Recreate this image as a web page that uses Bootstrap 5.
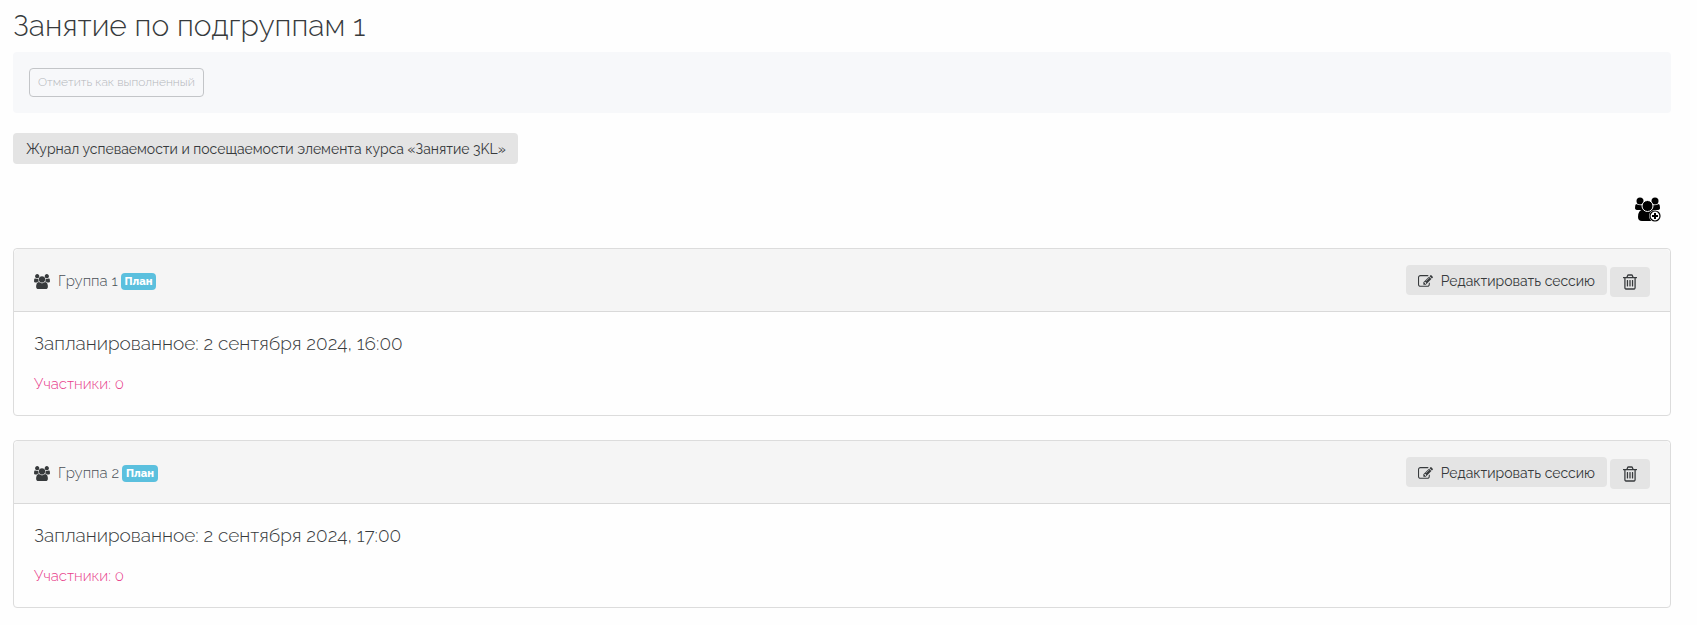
<!DOCTYPE html>
<html lang="ru">
<head>
<meta charset="utf-8">
<meta name="viewport" content="width=device-width, initial-scale=1">
<title>Занятие по подгруппам 1</title>
<link rel="stylesheet" href="https://cdn.jsdelivr.net/npm/bootstrap@5.3.0/dist/css/bootstrap.min.css">
<style>
body { font-family: Raleway, Lato, sans-serif; font-size: 15px; font-weight: 300; line-height: 23px; color: #373a3c; background: #fefefe; }
.page { padding: 7px 26px 16px 13px; }
.page-title { font-size: 30px; line-height: 37px; font-weight: 300; margin-bottom: 8px; }
.completion { background: #f7f8fa; padding: 16px; margin-bottom: 20px; }
.btn-done { font-size: 12px; line-height: 19px; font-weight: 300; padding: 4px 8px; border-radius: 4px; }
.btn-done:disabled { color: #b4b7ba; border-color: #c3c5c8; opacity: 1; }
.btn-grey { background: #e4e4e4; color: #373a3c; font-size: 14px; line-height: 20px; font-weight: 400; padding: 5px 13px; border-radius: 4px; border: 0; }
.btn-grey:hover { background: #d6d6d6; }
.btn-journal { line-height: 21px; padding: 6px 12px 4px 13px; }
.btn-edit { margin-bottom: 2px; padding: 6px 12px 4px; }
.actions { gap: 3px; }
.add-group { color: #000; line-height: 0; margin-right: 9px; }
.session { border-color: #dcdcdc; border-radius: 4px; background: #fefefe; }
.session-head { background: #f5f5f5; border-color: #d9d9d9; padding: 16px 20px 14px; }
.session-head h2 { font-size: 15px; line-height: 23px; font-weight: 300; color: #495057; }
.session-head h2 svg { color: #373a3c; }
.session-body { padding: 20px 20px 19px; }
.session-time { font-size: 19px; line-height: 23px; font-weight: 300; margin-bottom: 18px; }
.members { color: #e83e8c; text-decoration: none; }
.plan { background: #5bc0de; font-size: 11px; line-height: 12px; font-weight: 800; padding: 3px 4px 2px; border-radius: 4px; margin-left: 3px; }
svg { fill: currentColor; flex: none; }
</style>
<script src="https://cdn.jsdelivr.net/npm/bootstrap@5.3.0/dist/js/bootstrap.bundle.min.js"></script>
</head>
<body>
<svg class="d-none" aria-hidden="true">
  <symbol id="users" viewBox="0 0 1920 1792"><path d="M593 896q-162 5-265 128h-134q-82 0-138-40.5t-56-118.5q0-353 124-353 6 0 43.5 21t97.5 42.5 119 21.5q67 0 133-23-5 37-5 66 0 139 81 256zm1071 637q0 120-73 189.5t-194 69.5h-874q-121 0-194-69.5t-73-189.5q0-53 3.5-103.5t14-109 26.5-108.5 43-97.5 62-81 85.5-53.5 111.5-20q10 0 43 21.5t73 48 107 48 135 21.5 135-21.5 107-48 73-48 43-21.5q61 0 111.5 20t85.5 53.5 62 81 43 97.5 26.5 108.5 14 109 3.5 103.5zm-1024-1277q0 106-75 181t-181 75-181-75-75-181 75-181 181-75 181 75 75 181zm704 384q0 159-112.5 271.5t-271.5 112.5-271.5-112.5-112.5-271.5 112.5-271.5 271.5-112.5 271.5 112.5 112.5 271.5zm576 225q0 78-56 118.5t-138 40.5h-134q-103-123-265-128 81-117 81-256 0-29-5-66 66 23 133 23 59 0 119-21.5t97.5-42.5 43.5-21q124 0 124 353zm-128-609q0 106-75 181t-181 75-181-75-75-181 75-181 181-75 181 75 75 181z"/></symbol>
  <symbol id="edit" viewBox="0 0 1792 1792"><path d="M888 1184l116-116-152-152-116 116v56h96v96h56zm440-720q-16-16-33 1l-350 350q-17 17-1 33t33-1l350-350q17-17 1-33zm80 594v190q0 119-84.5 203.5t-203.5 84.5h-832q-119 0-203.5-84.5t-84.5-203.5v-832q0-119 84.5-203.5t203.5-84.5h832q63 0 117 25 15 7 18 23 3 17-9 29l-49 49q-14 14-32 8-23-6-45-6h-832q-66 0-113 47t-47 113v832q0 66 47 113t113 47h832q66 0 113-47t47-113v-126q0-13 9-22l64-64q15-15 35-7t20 29zm-96-738l288 288-672 672h-288v-288zm444 132l-92 92-288-288 92-92q28-28 68-28t68 28l152 152q28 28 28 68t-28 68z"/></symbol>
  <symbol id="trash" viewBox="192 128 1408 1536"><path d="M704 736v576q0 14-9 23t-23 9h-64q-14 0-23-9t-9-23v-576q0-14 9-23t23-9h64q14 0 23 9t9 23zm256 0v576q0 14-9 23t-23 9h-64q-14 0-23-9t-9-23v-576q0-14 9-23t23-9h64q14 0 23 9t9 23zm256 0v576q0 14-9 23t-23 9h-64q-14 0-23-9t-9-23v-576q0-14 9-23t23-9h64q14 0 23 9t9 23zm128 724v-948h-896v948q0 22 7 40.5t14.5 27 10.5 8.5h832q3 0 10.5-8.5t14.5-27 7-40.5zm-672-1076h448l-48-117q-7-9-17-11h-317q-10 2-17 11zm928 32v64q0 14-9 23t-23 9h-96v948q0 83-47 143.5t-113 60.5h-832q-66 0-113-58.5t-47-141.5v-952h-96q-14 0-23-9t-9-23v-64q0-14 9-23t23-9h309l70-167q15-37 54-63t79-26h320q40 0 79 26t54 63l70 167h309q14 0 23 9t9 23z"/></symbol>
</svg>
<main class="page">
  <h1 class="page-title">Занятие по подгруппам 1</h1>
  <div class="completion rounded-1 d-flex">
    <button type="button" class="btn btn-outline-secondary btn-done" disabled>Отметить как выполненный</button>
  </div>
  <button type="button" class="btn btn-grey btn-journal d-block">Журнал успеваемости и посещаемости элемента курса «Занятие 3KL»</button>
  <div class="d-flex justify-content-end mt-4 mb-4 pt-2">
    <a href="#" class="add-group" aria-label="Добавить группу">
      <svg width="28" height="28" viewBox="0 0 28 28"><circle cx="6" cy="5" r="3.500"/><circle cx="21" cy="5" r="3.500"/><path d="M2 8q4 2 7 1v5H4q-3 0-3-2 0-3 1-4zM25 8q-4 2-7 1v5h5q3 0 3-2 0-3-1-4z"/><path d="M4 21q0-7 5-7.500 4 2 9 0 5 .500 5 7.500 0 4-3 4H8q-4 0-4-4z"/><circle cx="13.500" cy="10" r="5.500" stroke="#fefefe"/><circle cx="21" cy="20" r="6" fill="#fefefe"/><circle cx="21" cy="20" r="5" fill="#fefefe" stroke="#000" stroke-width="1.200"/><path d="M20 17h2v2h2v2h-2v2h-2v-2h-2v-2h2z"/></svg>
    </a>
  </div>
  <section class="card session mb-4">
    <div class="card-header session-head d-flex justify-content-between align-items-center">
      <h2 class="d-flex align-items-center mb-0"><svg class="me-2" width="16" height="15"><use href="#users"/></svg>Группа 1<span class="badge plan">План</span></h2>
      <div class="d-flex align-items-end actions">
        <button type="button" class="btn btn-grey btn-edit d-flex align-items-center"><svg class="me-2" width="15" height="15"><use href="#edit"/></svg>Редактировать сессию</button>
        <button type="button" class="btn btn-grey" aria-label="Удалить"><svg class="d-block" width="14" height="20"><use href="#trash"/></svg></button>
      </div>
    </div>
    <div class="card-body session-body">
      <h3 class="session-time">Запланированное: 2 сентября 2024, 16:00</h3>
      <a href="#" class="members d-block">Участники: 0</a>
    </div>
  </section>
  <section class="card session">
    <div class="card-header session-head d-flex justify-content-between align-items-center">
      <h2 class="d-flex align-items-center mb-0"><svg class="me-2" width="16" height="15"><use href="#users"/></svg>Группа 2<span class="badge plan">План</span></h2>
      <div class="d-flex align-items-end actions">
        <button type="button" class="btn btn-grey btn-edit d-flex align-items-center"><svg class="me-2" width="15" height="15"><use href="#edit"/></svg>Редактировать сессию</button>
        <button type="button" class="btn btn-grey" aria-label="Удалить"><svg class="d-block" width="14" height="20"><use href="#trash"/></svg></button>
      </div>
    </div>
    <div class="card-body session-body">
      <h3 class="session-time">Запланированное: 2 сентября 2024, 17:00</h3>
      <a href="#" class="members d-block">Участники: 0</a>
    </div>
  </section>
</main>
</body>
</html>
